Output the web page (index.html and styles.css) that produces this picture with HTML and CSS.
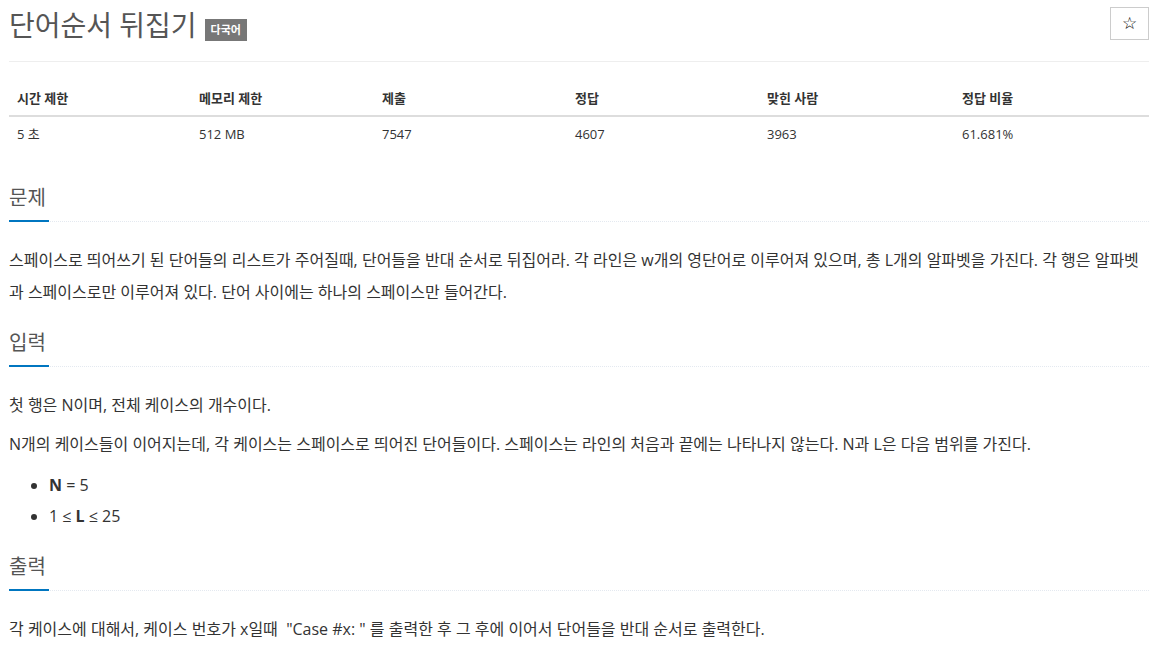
FILE: index.html
```html
<!DOCTYPE html>
<html lang="ko">
<head>
<meta charset="utf-8">
<title>단어순서 뒤집기</title>
<link rel="stylesheet" href="styles.css">
</head>
<body>
<div class="page">
  <div class="page-header">
    <h1 class="title"><span class="title-text">단어순서 뒤집기</span><span class="badge">다국어</span></h1>
    <button class="star-btn" type="button">☆</button>
  </div>

  <table class="info">
    <thead>
      <tr>
        <th class="c1">시간 제한</th>
        <th class="c2">메모리 제한</th>
        <th class="c3">제출</th>
        <th class="c4">정답</th>
        <th class="c5">맞힌 사람</th>
        <th class="c6">정답 비율</th>
      </tr>
    </thead>
    <tbody>
      <tr>
        <td>5 초</td>
        <td>512 MB</td>
        <td>7547</td>
        <td>4607</td>
        <td>3963</td>
        <td>61.681%</td>
      </tr>
    </tbody>
  </table>

  <section class="section">
    <div class="headline"><h2>문제</h2></div>
    <div class="text">
      <p>스페이스로 띄어쓰기 된 단어들의 리스트가 주어질때, 단어들을 반대 순서로 뒤집어라. 각 라인은 w개의 영단어로 이루어져 있으며, 총 L개의 알파벳을 가진다. 각 행은 알파벳과 스페이스로만 이루어져 있다. 단어 사이에는 하나의 스페이스만 들어간다.</p>
    </div>
  </section>

  <section class="section">
    <div class="headline"><h2>입력</h2></div>
    <div class="text">
      <p>첫 행은 N이며, 전체 케이스의 개수이다.</p>
      <p>N개의 케이스들이 이어지는데, 각 케이스는 스페이스로 띄어진 단어들이다. 스페이스는 라인의 처음과 끝에는 나타나지 않는다. N과 L은 다음 범위를 가진다.</p>
      <ul>
        <li><strong>N</strong> = 5</li>
        <li>1 ≤ <strong>L</strong> ≤ 25</li>
      </ul>
    </div>
  </section>

  <section class="section">
    <div class="headline"><h2>출력</h2></div>
    <div class="text">
      <p>각 케이스에 대해서, 케이스 번호가 x일때 &nbsp;"Case #x: " 를 출력한 후 그 후에 이어서 단어들을 반대 순서로 출력한다.</p>
    </div>
  </section>
</div>
</body>
</html>
```

FILE: styles.css
```css
* { box-sizing: border-box; }
html, body { margin: 0; padding: 0; background: #fff; }
body {
  font-family: "Open Sans", "Noto Sans CJK KR", sans-serif;
  color: #333;
  font-size: 13px;
}
.page {
  width: 1140px;
  margin-left: 9px;
}
.page-header {
  display: flex;
  justify-content: space-between;
  align-items: flex-start;
  padding-top: 7px;
  padding-bottom: 18px;
  border-bottom: 1px solid #eee;
}
.title {
  margin: 0;
  font-size: 28px;
  font-weight: 400;
  line-height: 36px;
  color: #555;
  display: flex;
  align-items: flex-start;
  gap: 8px;
}
.badge {
  display: inline-block;
  background: #777;
  color: #fff;
  font-size: 11px;
  font-weight: 700;
  line-height: 22px;
  height: 22px;
  padding: 0 6px;
  margin-top: 12px;
}
.star-btn {
  width: 39px;
  height: 33px;
  border: 1px solid #ccc;
  background: #fff;
  font-size: 17px;
  line-height: 1;
  color: #000;
  padding: 0;
  font-family: "DejaVu Sans", sans-serif;
}
.info {
  width: 100%;
  border-collapse: collapse;
  margin-top: 19px;
}
.info th, .info td {
  text-align: left;
  padding: 8px 8px;
  line-height: 18px;
  font-size: 13px;
}
.info th {
  font-weight: 700;
  border-bottom: 2px solid #ddd;
}
.c1 { width: 182px; }
.c2 { width: 183px; }
.c3 { width: 193px; }
.c4 { width: 192px; }
.c5 { width: 195px; }
.section { margin-top: 33px; }
.section + .section { margin-top: 21px; }
.headline {
  border-bottom: 1px dotted #e4e9f0;
}
.headline h2 {
  display: inline-block;
  margin: 0 0 -1px 0;
  font-size: 20px;
  font-weight: 400;
  line-height: 28px;
  padding-bottom: 8px;
  color: #555;
  border-bottom: 2px solid #0076c0;
  width: 40px;
  white-space: nowrap;
}
.text {
  padding-top: 22px;
  font-size: 16px;
}
.text p {
  margin: 0 0 7px 0;
  line-height: 32px;
}
.text ul {
  margin: 10px 0 0 0;
  padding-left: 40px;
}
.text li {
  line-height: 31px;
}
.text strong { font-weight: 700; }
```
